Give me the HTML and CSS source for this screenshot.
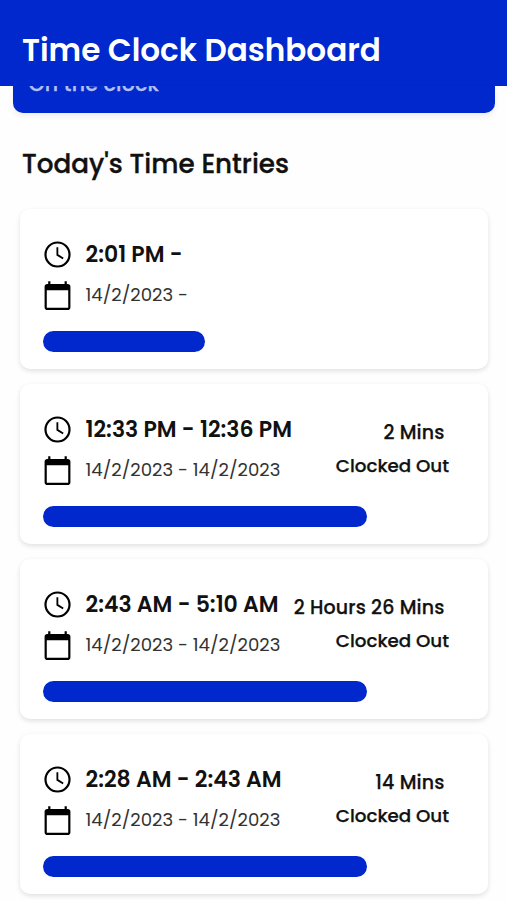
FILE: index.html
```html
<!DOCTYPE html>
<html lang="en">
<head>
<meta charset="utf-8">
<title>Time Clock Dashboard</title>
<link rel="stylesheet" href="styles.css">
</head>
<body>
<svg class="sprite" aria-hidden="true">
  <symbol id="clock" viewBox="0 0 24 24"><circle cx="12" cy="12" r="9.3" fill="none" stroke="#000" stroke-width="1.7"/><path d="M11.9 6.3v6l4.5 2.8" fill="none" stroke="#000" stroke-width="1.4"/></symbol>
  <symbol id="calendar" viewBox="0 0 24 24"><path d="M20 3h-.8V1h-1.7v2H6.5V1H4.8v2H4c-1.1 0-2 .9-2 2v16.2c0 1.1.9 2 2 2h16c1.1 0 2-.9 2-2V5c0-1.1-.9-2-2-2zm.3 18.5H3.700V8h16.600v13.500z"/></symbol>
</svg>
<header class="header"><h1 class="title">Time Clock Dashboard</h1></header>
<main>
  <section class="status"><p class="status-text">On the clock</p></section>
  <h2 class="heading">Today's Time Entries</h2>
  <div class="entries">
    <article class="card">
      <div class="details">
        <div class="row"><svg class="icon"><use href="#clock"/></svg><span class="time">2:01 PM -</span></div>
        <div class="row"><svg class="icon"><use href="#calendar"/></svg><span class="date">14/2/2023 -</span></div>
      </div>
      <div class="bar bar-short"></div>
    </article>
    <article class="card">
      <div class="details">
        <div class="row"><svg class="icon"><use href="#clock"/></svg><span class="time">12:33 PM - 12:36 PM</span><span class="duration">2 Mins</span></div>
        <div class="row"><svg class="icon"><use href="#calendar"/></svg><span class="date">14/2/2023 - 14/2/2023</span><span class="state">Clocked Out</span></div>
      </div>
      <div class="bar"></div>
    </article>
    <article class="card">
      <div class="details">
        <div class="row"><svg class="icon"><use href="#clock"/></svg><span class="time">2:43 AM - 5:10 AM</span><span class="duration">2 Hours 26 Mins</span></div>
        <div class="row"><svg class="icon"><use href="#calendar"/></svg><span class="date">14/2/2023 - 14/2/2023</span><span class="state">Clocked Out</span></div>
      </div>
      <div class="bar"></div>
    </article>
    <article class="card">
      <div class="details">
        <div class="row"><svg class="icon"><use href="#clock"/></svg><span class="time">2:28 AM - 2:43 AM</span><span class="duration">14 Mins</span></div>
        <div class="row"><svg class="icon"><use href="#calendar"/></svg><span class="date">14/2/2023 - 14/2/2023</span><span class="state">Clocked Out</span></div>
      </div>
      <div class="bar"></div>
    </article>
  </div>
</main>
</body>
</html>
```
FILE: styles.css
```css
* { box-sizing: border-box; }
body {
  margin: 0;
  height: 900px;
  overflow: hidden;
  background: #fefefe;
  color: #111;
  font-family: Poppins, Inter, sans-serif;
}
h1, h2, p { margin: 0; }
.sprite { display: none; }
.header {
  height: 86px;
  padding: 29.5px 22px 0;
  background: #0028cc;
  color: #fff;
}
.title { font-size: 31.1px; line-height: 40px; font-weight: 600; white-space: nowrap; }
.status {
  height: 27.4px;
  margin: 0 12px 0 12.5px;
  padding-left: 16px;
  overflow: hidden;
  border-radius: 0 0 10px 10px;
  background: #0028cc;
  box-shadow: 0 3px 6px rgba(0, 0, 0, 0.07);
}
.status-text { margin-top: -17.4px; font-size: 20.5px; line-height: 30px; font-weight: 500; letter-spacing: 0.2px; color: #b3c1f5; -webkit-text-stroke: 0.3px #b3c1f5; }
.heading { margin: 33px 22px 0; font-size: 26.2px; line-height: 36px; font-weight: 500; white-space: nowrap; -webkit-text-stroke: 0.35px #111; }
.entries { display: grid; gap: 15.15px; margin: 26.6px 19px 0 20px; }
.card {
  height: 160px;
  padding: 30px 0 0 22.5px;
  border-radius: 10px;
  background: #fff;
  box-shadow: 0 2px 5px rgba(0, 0, 0, 0.12);
}
.details { display: grid; gap: 10px; }
.row { display: flex; height: 31px; align-items: center; white-space: nowrap; }
.icon { flex: none; width: 31px; height: 31px; margin: 0 12.5px 0 -0.5px; }
.time { font-size: 22px; font-weight: 600; }
.date { margin-top: -2px; font-size: 18.1px; font-weight: 400; color: #333; }
.duration, .state { margin-left: auto; font-size: 18.3px; font-weight: 500; -webkit-text-stroke: 0.25px #111; }
.duration { margin-right: 43.5px; padding-top: 6px; font-size: 19px; letter-spacing: 0.15px; }
.state { margin-right: 39px; margin-top: -10px; }
.bar { width: 324px; height: 21px; margin-top: 20px; border-radius: 11px; background: #0028cc; }
.bar-short { width: 162px; }
```
